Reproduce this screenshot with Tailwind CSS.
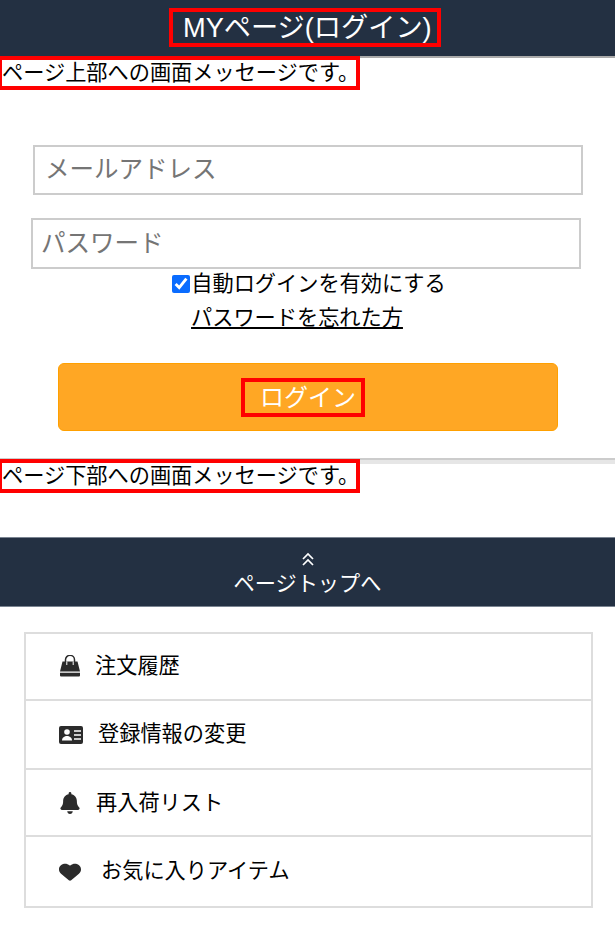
<!DOCTYPE html>
<html lang="ja">
<head>
  <meta charset="UTF-8">
  <meta name="viewport" content="width=device-width, initial-scale=1.0">
  <title>MYページ(ログイン)</title>
  <script src="https://cdn.jsdelivr.net/npm/@tailwindcss/browser@4"></script>
</head>
<body class="bg-white text-black font-['Liberation_Sans','Noto_Sans_CJK_JP',sans-serif] text-[21.2px] leading-[26px]">
  <!-- header -->
  <header class="h-[56px] bg-[#233042] flex justify-center items-start pt-[8px]">
    <h1 class="mr-[5px] h-[39px] w-[272px] border-4 border-[#ff0000] pl-[10px] text-white text-[27.2px] leading-[32px] whitespace-nowrap">MYページ(ログイン)</h1>
  </header>
  <div class="h-[2px] bg-[#aaaaaa]"></div>
  <p class="-mt-[2px] relative w-[360px] h-[34px] border-4 border-l-2 border-[#ff0000] bg-white leading-[26px] whitespace-nowrap">ページ上部への画面メッセージです。</p>

  <!-- login form -->
  <form class="flex flex-col">
    <input type="text" placeholder="メールアドレス" class="mt-[55px] ml-[33px] w-[550px] h-[50px] border-2 border-[#cccccc] px-[10px] text-[24.5px] placeholder:text-[#757575] outline-none">
    <input type="password" placeholder="パスワード" class="mt-[23px] ml-[31px] w-[550px] h-[51px] border-2 border-[#cccccc] px-[8px] text-[24.5px] placeholder:text-[#757575] outline-none">
    <label class="h-[30px] flex items-center justify-center gap-[1px] pl-[3px]">
      <input type="checkbox" checked class="w-[18px] h-[18px] m-0 accent-[#0a6cff]">
      <span>自動ログインを有効にする</span>
    </label>
    <a href="#" class="mt-[5px] mr-[21px] self-center underline leading-[28px]">パスワードを忘れた方</a>
    <button type="button" class="mt-[31px] ml-[58px] w-[500px] h-[68px] bg-[#ffa724] border border-[#ffa000] rounded-[6px] flex items-center justify-center">
      <span class="mr-[10px] w-[124px] h-[39px] border-4 border-[#ff0000] pl-[15px] text-left text-white text-[24px] leading-[31px] whitespace-nowrap">ログイン</span>
    </button>
  </form>

  <div class="mt-[27px] h-[6px] bg-[#e6e6e6] border-t-2 border-[#cccccc]"></div>
  <p class="-mt-[5px] relative w-[360px] h-[34px] border-4 border-l-2 border-[#ff0000] bg-white leading-[26px] whitespace-nowrap">ページ下部への画面メッセージです。</p>

  <!-- page top -->
  <a href="#" class="mt-[44px] h-[70px] bg-[#233042] border-y border-[#7a8491] flex flex-col items-center text-white">
    <svg class="mt-[14px] w-[14px] h-[14px]" viewBox="0 0 14 14" fill="none" stroke="white" stroke-width="1.7">
      <path d="M2 7 L7 2 L12 7"/>
      <path d="M2 13 L7 8 L12 13"/>
    </svg>
    <span class="mt-[5px]">ページトップへ</span>
  </a>

  <!-- menu -->
  <ul class="mt-[25px] ml-[24px] w-[569px] border-2 border-[#dddddd]">
    <li class="h-[67px] flex items-center border-b-2 border-[#dddddd] pl-[33px] pb-[2px]">
      <svg class="w-[22px] h-[22px] mt-[1px] text-[#2b2b2b]" viewBox="0 0 22 22" fill="currentColor">
        <path d="M3.5 6.5 H18.5 L21 16.5 H1 Z"/>
        <path d="M6.5 10 V4.8 a4.5 4.5 0 0 1 9 0 V10" fill="none" stroke="currentColor" stroke-width="1.5"/>
        <path d="M7.8 6.5 V10 M14.2 6.5 V10" stroke="white" stroke-width="1"/>
        <path d="M1 17.8 H21 V20.5 a1 1 0 0 1 -1 1 H2 a1 1 0 0 1 -1 -1 Z"/>
      </svg>
      <span class="ml-[14px]">注文履歴</span>
    </li>
    <li class="h-[69px] flex items-center border-b-2 border-[#dddddd] pl-[33px] pb-[2px]">
      <svg class="w-[24px] h-[18px] mt-[3px] text-[#2b2b2b]" viewBox="0 0 24 18">
        <rect width="24" height="18" rx="2" fill="currentColor"/>
        <circle cx="8" cy="6" r="2.8" fill="white"/>
        <path d="M3 14.5 c0 -6 10 -6 10 0 Z" fill="white"/>
        <path d="M15 5 H22 M15 9 H22 M15 13 H22" stroke="white" stroke-width="1.6"/>
      </svg>
      <span class="ml-[15px]">登録情報の変更</span>
    </li>
    <li class="h-[67px] flex items-center border-b-2 border-[#dddddd] pl-[34px] pt-[1px]">
      <svg class="w-[20px] h-[22px] text-[#2b2b2b]" viewBox="0 0 448 512" fill="currentColor">
        <path d="M224 0c-17.7 0-32 14.3-32 32V51.2C119 66 64 130.6 64 208v18.8c0 47-17.3 92.4-48.5 127.6l-7.4 8.3c-8.4 9.4-10.4 22.9-5.3 34.4S19.4 416 32 416H416c12.6 0 24-7.4 29.2-18.9s3.1-25-5.3-34.4l-7.4-8.3C401.3 319.2 384 273.9 384 226.8V208c0-77.4-55-142-128-156.8V32c0-17.7-14.3-32-32-32zm45.3 493.3c12-12 18.7-28.3 18.7-45.3H224 160c0 17 6.7 33.3 18.7 45.3s28.3 18.7 45.3 18.7s33.3-6.7 45.3-18.7z"/>
      </svg>
      <span class="ml-[16px]">再入荷リスト</span>
    </li>
    <li class="h-[69px] flex items-center pl-[33px] pb-[2px]">
      <svg class="w-[22px] h-[20px] mt-[2px] text-[#2b2b2b]" viewBox="0 0 512 512" preserveAspectRatio="none" fill="currentColor">
        <path d="M47.6 300.4L228.3 469.1c7.5 7 17.4 10.9 27.7 10.9s20.2-3.9 27.7-10.9L464.4 300.4c30.4-28.3 47.6-68 47.6-109.5v-5.8c0-69.9-50.5-129.5-119.4-141C347 36.5 300.6 51.4 268 84L256 96 244 84c-32.6-32.6-79-47.5-124.6-39.9C50.5 55.6 0 115.2 0 185.1v5.8c0 41.5 17.2 81.2 47.6 109.5z"/>
      </svg>
      <span class="ml-[20px]">お気に入りアイテム</span>
    </li>
  </ul>
</body>
</html>
